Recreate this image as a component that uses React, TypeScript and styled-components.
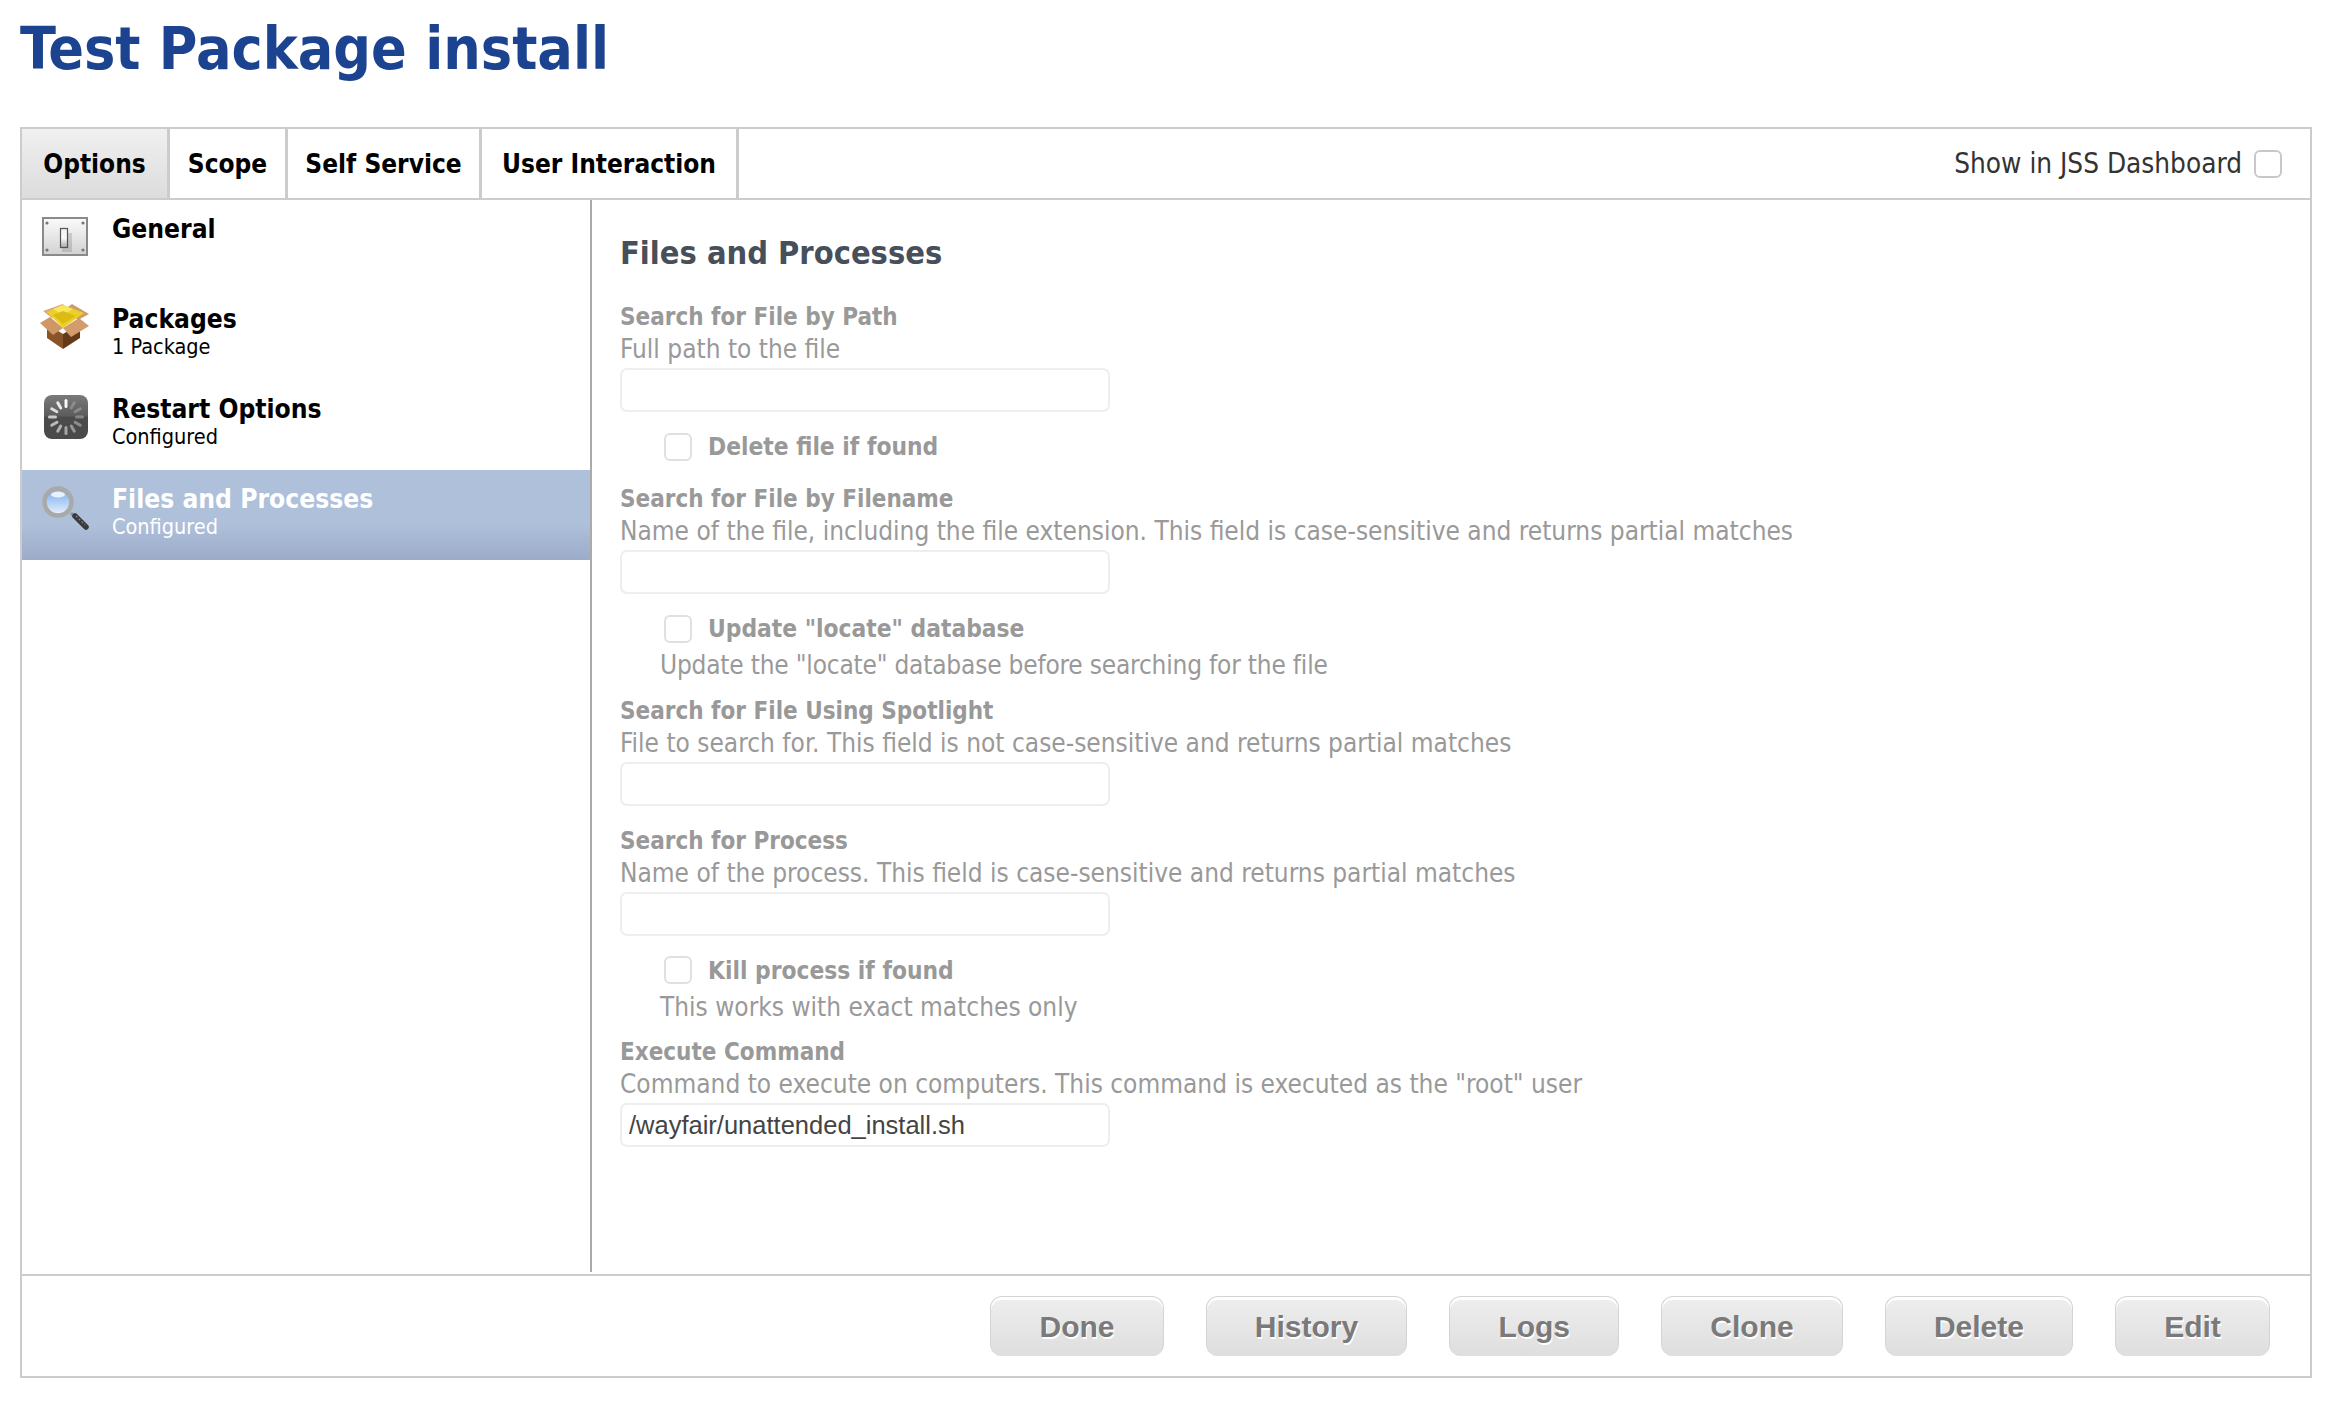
import React from 'react';
import styled, {createGlobalStyle} from 'styled-components';

const sans = `"DejaVu Sans Condensed", "DejaVu Sans", sans-serif`;

const GlobalStyle = createGlobalStyle`
  html, body {
    margin: 0;
    padding: 0;
    background: #fff;
    font-family: ${sans};
  }
  * {
    box-sizing: border-box;
  }
`;

const SwitchIcon = () => (
    <svg width="50" height="50" viewBox="0 0 50 50">
        <defs>
            <linearGradient id="plate" x1="0" y1="0" x2="0" y2="1">
                <stop offset="0" stopColor="#fbfbfb"/>
                <stop offset="1" stopColor="#d2d2d2"/>
            </linearGradient>
            <linearGradient id="lever" x1="0" y1="0" x2="0" y2="1">
                <stop offset="0" stopColor="#eeeeee"/>
                <stop offset="0.5" stopColor="#fafafa"/>
                <stop offset="1" stopColor="#a8a8a8"/>
            </linearGradient>
        </defs>
        <rect x="3" y="5" width="44" height="37" fill="url(#plate)" stroke="#8a8a8a" strokeWidth="2"/>
        <rect x="22" y="20" width="10" height="19" fill="#000" opacity="0.13"/>
        <rect x="20.5" y="15.5" width="7" height="19" fill="url(#lever)" stroke="#555" strokeWidth="1.2"/>
        {[[7, 10], [43, 10], [7, 37], [43, 37]].map(([cx, cy]) => (
            <circle key={`${cx}-${cy}`} cx={cx} cy={cy} r="1.6" fill="#777"/>
        ))}
    </svg>
);

const BoxIcon = () => (
    <svg width="50" height="50" viewBox="0 0 50 50">
        <polygon points="3,8 23,1 28,7 12,15" fill="#d9a978"/>
        <polygon points="32,1 49,11 38,17 25,6" fill="#cf9b68"/>
        <polygon points="7,9 23,2 44,10 23,25" fill="#ecd02a"/>
        <polygon points="23,2 33,6 23,12 13,6" fill="#f8e75a"/>
        <polygon points="13,12 23,8 36,13 23,21" fill="#dcbc12"/>
        <polygon points="7,21 23,31 23,46 7,35" fill="#8a5429"/>
        <polygon points="23,31 40,21 40,35 23,46" fill="#653a1b"/>
        <polygon points="0,20 10,14 23,25 13,32" fill="#cf9666"/>
        <polygon points="23,25 39,15 49,23 31,34" fill="#d29c6c"/>
    </svg>
);

const SpinnerIcon = () => (
    <svg width="50" height="50" viewBox="0 0 50 50">
        <defs>
            <linearGradient id="spin" x1="0" y1="0" x2="0" y2="1">
                <stop offset="0" stopColor="#7a7a7a"/>
                <stop offset="0.48" stopColor="#5c5c5c"/>
                <stop offset="0.5" stopColor="#4b4b4b"/>
                <stop offset="1" stopColor="#4a4a4a"/>
            </linearGradient>
        </defs>
        <rect x="4" y="2" width="44" height="44" rx="8" fill="url(#spin)"/>
        {Array.from({length: 12}).map((_, i) => (
            <rect
                key={i}
                x="24.5"
                y="6"
                width="3"
                height="9"
                rx="1.5"
                fill="#fff"
                opacity={[0.95, 0.22, 0.25, 0.3, 0.36, 0.42, 0.5, 0.56, 0.62, 0.7, 0.78, 0.86][i]}
                transform={`rotate(${i * 30} 26 24)`}
            />
        ))}
    </svg>
);

const LensIcon = () => (
    <svg width="50" height="50" viewBox="0 0 50 50">
        <defs>
            <linearGradient id="glass" x1="0" y1="0" x2="0" y2="1">
                <stop offset="0" stopColor="#78aaec"/>
                <stop offset="0.55" stopColor="#b4d2f6"/>
                <stop offset="1" stopColor="#eef5fd"/>
            </linearGradient>
        </defs>
        <line x1="31" y1="30" x2="35" y2="34" stroke="#8f8f8f" strokeWidth="3"/>
        <line x1="35" y1="33" x2="46" y2="44" stroke="#3a3a3a" strokeWidth="5.5" strokeLinecap="round"/>
        <line x1="36" y1="33" x2="45" y2="42" stroke="#8a8a8a" strokeWidth="1.2" strokeDasharray="2 2"/>
        <circle cx="18" cy="19" r="13.5" fill="url(#glass)" stroke="#a9a9a9" strokeWidth="4.5"/>
        <ellipse cx="18" cy="11.5" rx="7" ry="3" fill="#fff" opacity="0.8"/>
    </svg>
);

const tabs = [
    {label: 'Options', width: 148, active: true},
    {label: 'Scope', width: 118},
    {label: 'Self Service', width: 194},
    {label: 'User Interaction', width: 257},
];

const menu = [
    {title: 'General', sub: '', icon: <SwitchIcon/>},
    {title: 'Packages', sub: '1 Package', icon: <BoxIcon/>},
    {title: 'Restart Options', sub: 'Configured', icon: <SpinnerIcon/>},
    {title: 'Files and Processes', sub: 'Configured', icon: <LensIcon/>, active: true},
];

const buttons = ['Done', 'History', 'Logs', 'Clone', 'Delete', 'Edit'];

const App = () => {
    return (
        <Page>
            <GlobalStyle/>
            <Title>Test Package install</Title>
            <Panel>
                <TabBar>
                    {tabs.map(tab => (
                        <Tab key={tab.label} $width={tab.width} $active={tab.active}>{tab.label}</Tab>
                    ))}
                    <Dashboard>
                        Show in JSS Dashboard
                        <Check $dark/>
                    </Dashboard>
                </TabBar>
                <Main>
                    <Sidebar>
                        {menu.map(item => (
                            <MenuRow key={item.title} $active={item.active}>
                                <MenuIcon>{item.icon}</MenuIcon>
                                <MenuText>
                                    <MenuTitle>{item.title}</MenuTitle>
                                    <MenuSub>{item.sub}</MenuSub>
                                </MenuText>
                            </MenuRow>
                        ))}
                    </Sidebar>
                    <Content>
                        <Heading>Files and Processes</Heading>

                        <Label>Search for File by Path</Label>
                        <Hint>Full path to the file</Hint>
                        <TextBox readOnly value=""/>
                        <CheckRow>
                            <Check/>
                            <CheckLabel>Delete file if found</CheckLabel>
                        </CheckRow>

                        <Label>Search for File by Filename</Label>
                        <Hint>Name of the file, including the file extension. This field is case-sensitive and returns partial matches</Hint>
                        <TextBox readOnly value=""/>
                        <CheckRow>
                            <Check/>
                            <CheckLabel>Update "locate" database</CheckLabel>
                        </CheckRow>
                        <CheckHint $tight>Update the "locate" database before searching for the file</CheckHint>

                        <Label>Search for File Using Spotlight</Label>
                        <Hint>File to search for. This field is not case-sensitive and returns partial matches</Hint>
                        <TextBox readOnly value=""/>

                        <Label>Search for Process</Label>
                        <Hint>Name of the process. This field is case-sensitive and returns partial matches</Hint>
                        <TextBox readOnly value=""/>
                        <CheckRow>
                            <Check/>
                            <CheckLabel>Kill process if found</CheckLabel>
                        </CheckRow>
                        <CheckHint>This works with exact matches only</CheckHint>

                        <Label>Execute Command</Label>
                        <Hint>Command to execute on computers. This command is executed as the "root" user</Hint>
                        <TextBox readOnly value="/wayfair/unattended_install.sh"/>
                    </Content>
                </Main>
                <Footer>
                    {buttons.map(label => (
                        <Button key={label}>{label}</Button>
                    ))}
                </Footer>
            </Panel>
        </Page>
    );
};

export default App;

const Page = styled.div`
  width: 2340px;
  height: 1410px;
  padding: 0 28px 32px 20px;
  display: flex;
  flex-direction: column;
  overflow: hidden;
`

const Title = styled.h1`
  margin: 0;
  height: 127px;
  padding-top: 15px;
  font-size: 58.6px;
  line-height: 68px;
  font-weight: 700;
  color: #1c4390;
`

const Panel = styled.section`
  flex: 1;
  display: flex;
  flex-direction: column;
  border: 2px solid #ccc;
`

const TabBar = styled.nav`
  height: 71px;
  flex: none;
  display: flex;
  border-bottom: 2px solid #ccc;
`

const Tab = styled.div<{ $active?: boolean; $width: number }>`
  width: ${props => props.$width}px;
  display: flex;
  align-items: center;
  justify-content: center;
  border-right: 3px solid #ccc;
  font-size: 26px;
  font-weight: 700;
  color: #000;
  background: ${props => props.$active ? 'linear-gradient(#f0f0f0, #dcdcdc)' : '#fff'};
`

const Dashboard = styled.label`
  margin-left: auto;
  padding-right: 28px;
  display: flex;
  align-items: center;
  gap: 12px;
  font-size: 27.7px;
  color: #333;
`

const Check = styled.span<{ $dark?: boolean }>`
  display: block;
  width: 28px;
  height: 28px;
  flex: none;
  border: 2px solid ${props => props.$dark ? '#c8c8c8' : '#e0e0e0'};
  border-radius: 6px;
  background: #fff;
`

const Main = styled.div`
  flex: 1;
  min-height: 0;
  display: flex;
`

const Sidebar = styled.aside`
  width: 570px;
  flex: none;
  margin-bottom: 2px;
  border-right: 2px solid #aaa;
`

const MenuRow = styled.div<{ $active?: boolean }>`
  height: 90px;
  padding-left: 18px;
  display: flex;
  gap: 22px;
  color: ${props => props.$active ? '#fff' : '#000'};
  background: ${props => props.$active ? 'linear-gradient(#afc0da 0%, #afc0da 60%, #9babc9 100%)' : 'transparent'};
`

const MenuIcon = styled.div`
  flex: none;
  width: 50px;
  height: 50px;
  margin-top: 13px;
`

const MenuText = styled.div`
  padding-top: 11px;
`

const MenuTitle = styled.div`
  font-size: 26.2px;
  line-height: 36px;
  font-weight: 700;
`

const MenuSub = styled.div`
  font-size: 21.5px;
  line-height: 20px;
`

const Content = styled.main`
  flex: 1;
  padding: 0 0 0 28px;
`

const Heading = styled.h2`
  margin: 0;
  padding-top: 33px;
  height: 101px;
  font-size: 32.3px;
  line-height: 40px;
  font-weight: 700;
  color: #474f5a;
`

const Hint = styled.div`
  margin-top: -1px;
  font-size: 26px;
  line-height: 33px;
  color: #999;
`

const TextBox = styled.input`
  display: block;
  width: 490px;
  height: 44px;
  margin-top: 2px;
  padding: 0 7px;
  border: 2px solid #eee;
  border-radius: 7px;
  outline: none;
  font-family: "Liberation Sans", Arial, sans-serif;
  font-size: 25.5px;
  color: #444;
`

const CheckRow = styled.div`
  height: 34px;
  margin-top: 17.7px;
  padding-left: 44px;
  display: flex;
  align-items: center;
  gap: 16px;
`

const CheckLabel = styled.span`
  font-size: 24.3px;
  font-weight: 700;
  color: #999;
`

const CheckHint = styled.div<{ $tight?: boolean }>`
  padding-left: 40px;
  margin-top: 2.3px;
  font-size: 26px;
  line-height: 34px;
  letter-spacing: ${props => props.$tight ? '-0.2px' : '0'};
  color: #999;
`

const Label = styled.div`
  font-size: 24px;
  line-height: 33px;
  font-weight: 700;
  color: #999;

  ${CheckRow} + & {
    margin-top: 19.5px;
  }

  ${CheckHint} + & {
    margin-top: 12.5px;
  }

  ${TextBox} + & {
    margin-top: 19px;
  }
`

const Footer = styled.footer`
  height: 102px;
  flex: none;
  padding: 20px 40px 0 0;
  border-top: 2px solid #ccc;
  display: flex;
  justify-content: flex-end;
  align-items: flex-start;
  gap: 42px;
`

const Button = styled.button`
  height: 60px;
  padding: 0 48.13px;
  border: 1px solid #d4d4d4;
  border-bottom: none;
  border-radius: 12px;
  box-shadow: inset 0 3px 0 #fff;
  background: linear-gradient(#eeeeee, #dedede);
  font-family: "Liberation Sans", Arial, sans-serif;
  font-size: 30px;
  font-weight: 700;
  color: #7a7a7a;
  text-shadow: 1px 2px 0 #fff;
`
